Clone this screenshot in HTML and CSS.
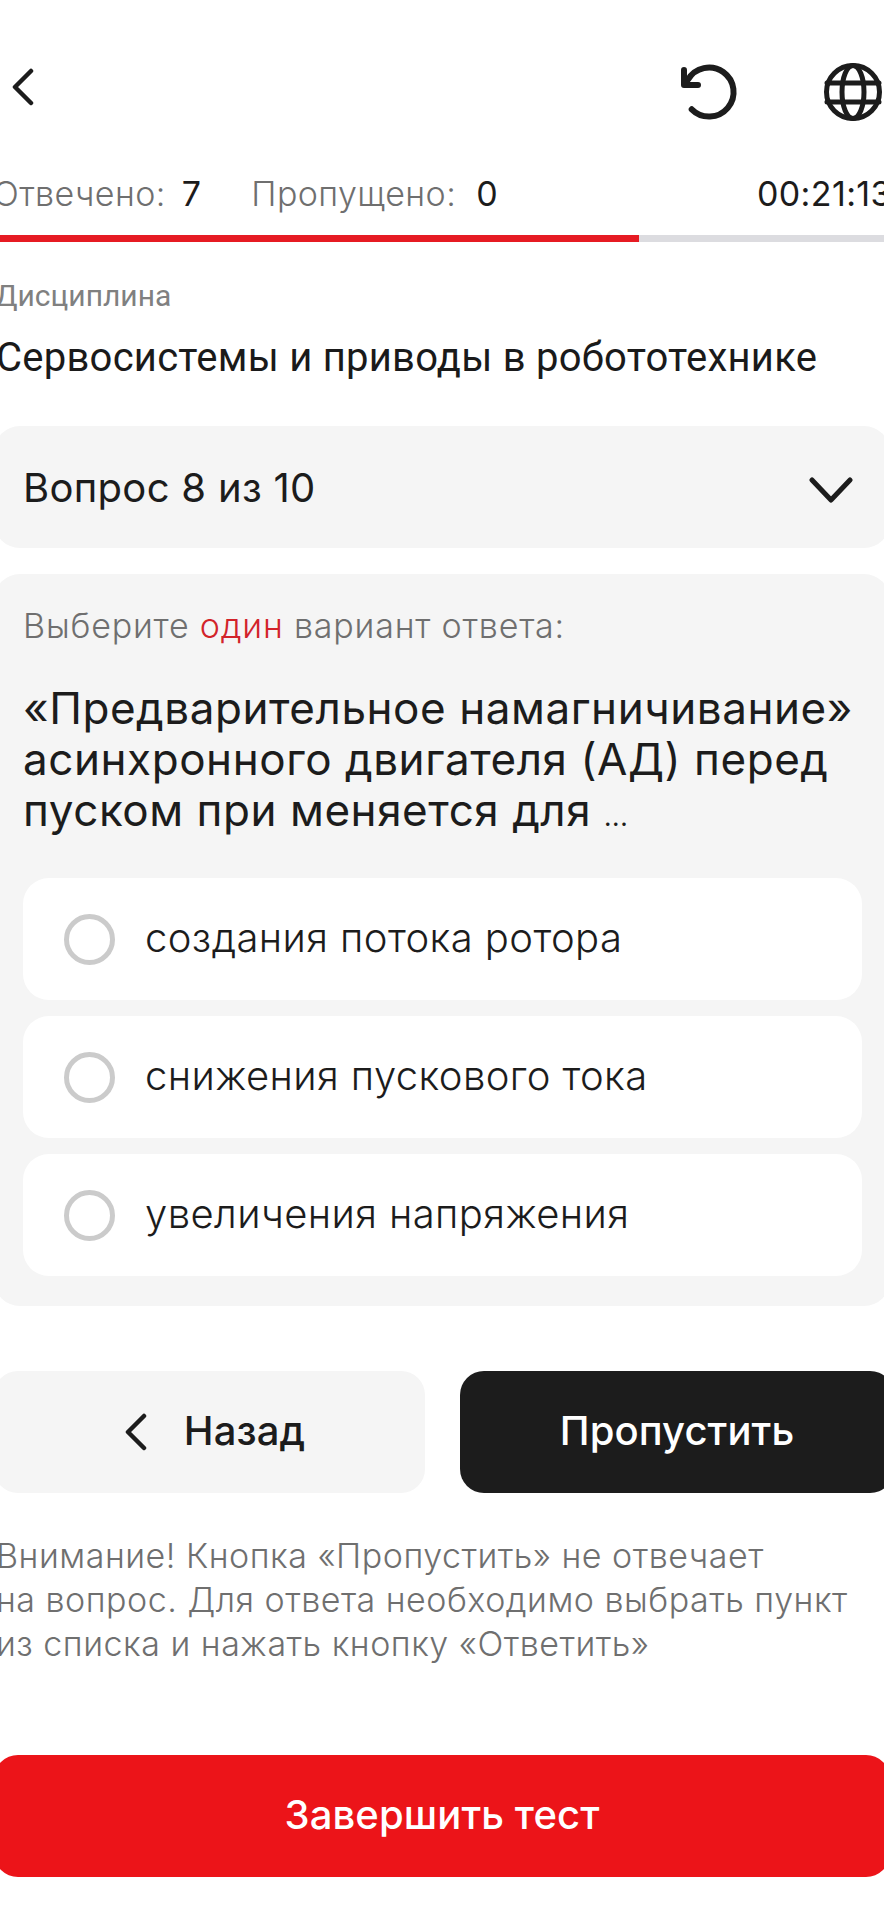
FILE: index.html
```html
<!DOCTYPE html>
<html lang="ru">
<head>
    <meta charset="UTF-8">
    <meta name="viewport" content="width=device-width, initial-scale=1.0">
    <title>Тест</title>
    <link rel="stylesheet" href="styles.css">
</head>
<body>
    <div id="page">
        <div class="topbar">
            <svg class="back-icon" viewBox="0 0 24 38"><path d="M20 3 L4 19 L20 35"/></svg>
            <div class="topbar-right">
                <svg class="top-icon" viewBox="0 0 60 60"><path d="M7.9 17.7 A24.5 24.5 0 1 1 11.7 47.3"/><path d="M4 8 V23 H18"/></svg>
                <svg class="top-icon globe" viewBox="0 0 60 60"><circle cx="30" cy="30" r="26.5"/><ellipse cx="30" cy="30" rx="11" ry="26.5"/><path d="M4 21 H56 M4 40 H56"/></svg>
            </div>
        </div>

        <div class="stats">
            <span class="stat">Отвечено: <b>7</b></span>
            <span class="stat">Пропущено: <b>0</b></span>
            <span class="timer">00:21:13</span>
        </div>
        <div class="progress"><div class="progress-fill" style="width: 639px"></div></div>

        <div class="subject">
            <p class="subject-label">Дисциплина</p>
            <p class="subject-name">Сервосистемы и приводы в робототехнике</p>
        </div>

        <div class="selector">
            <span>Вопрос 8 из 10</span>
            <svg class="selector-icon" viewBox="0 0 44 28"><path d="M3 4 L22 24 L41 4"/></svg>
        </div>

        <div class="question">
            <p class="prompt">Выберите <span class="accent">один</span> вариант ответа:</p>
            <h2 class="question-text">«Предварительное намагничивание» асинхронного двигателя (АД) перед пуском при меняется для <span class="dots">...</span></h2>
            <div class="options">
                <div class="option"><span class="radio"></span><span class="option-text">создания потока ротора</span></div>
                <div class="option"><span class="radio"></span><span class="option-text">снижения пускового тока</span></div>
                <div class="option"><span class="radio"></span><span class="option-text">увеличения напряжения</span></div>
            </div>
        </div>

        <div class="actions">
            <div class="btn btn-light">
                <svg class="btn-icon" viewBox="0 0 24 38"><path d="M20 3 L4 19 L20 35"/></svg>
                <span class="btn-text">Назад</span>
            </div>
            <div class="btn btn-dark"><span class="btn-text">Пропустить</span></div>
        </div>

        <p class="notice">Внимание! Кнопка «Пропустить» не отвечает<br>на вопрос. Для ответа необходимо выбрать пункт<br>из списка и нажать кнопку «Ответить»</p>

        <div class="btn btn-red"><span class="btn-text">Завершить тест</span></div>
    </div>
</body>
</html>
```

FILE: styles.css
```css
html, body {
    margin: 0;
    padding: 0;
    background: #fff;
    overflow: hidden;
}
body {
    font-family: Inter, "Noto Sans", sans-serif;
    color: #1c1c1c;
}
#page {
    width: 884px;
    height: 1920px;
    overflow: hidden;
}
p, h2 {
    margin: 0;
}
svg {
    fill: none;
    stroke: #1c1c1c;
    display: block;
}

.topbar {
    height: 62px;
    padding-top: 62px;
    display: flex;
    justify-content: space-between;
    align-items: flex-start;
}
.back-icon {
    width: 24px;
    height: 38px;
    margin: 6px 0 0 11px;
    stroke-width: 4.5;
    stroke-linecap: round;
    stroke-linejoin: round;
}
.topbar-right {
    display: flex;
    gap: 83px;
    margin-right: 1px;
}
.top-icon {
    width: 60px;
    height: 60px;
    stroke-width: 6;
    stroke-linecap: round;
    stroke-linejoin: round;
}
.globe {
    stroke-width: 5;
}

.stats {
    display: flex;
    align-items: center;
    height: 40px;
    margin: 49px -8px 0 -7px;
    font-size: 34px;
    font-weight: 300;
    letter-spacing: 0.4px;
    color: #6f6f6f;
    white-space: nowrap;
}
.stat {
    margin-right: 50px;
}
.stat b {
    font-weight: 400;
    color: #1c1c1c;
    margin-left: 6px;
}
.stat + .stat b {
    margin-left: 10px;
}
.timer {
    margin-left: auto;
    font-weight: 400;
    color: #1c1c1c;
}

.progress {
    height: 7px;
    margin-top: 22px;
    background: #dcdce0;
}
.progress-fill {
    height: 100%;
    background: #e61b23;
}

.subject {
    font-family: Roboto, sans-serif;
}
.subject-label {
    margin: 38px 0 0 -5px;
    font-size: 30px;
    line-height: 32px;
    color: #808080;
}
.subject-name {
    margin: 23px 0 0 -4px;
    font-size: 40px;
    line-height: 46px;
    letter-spacing: 0.25px;
    color: #1a1a1a;
}

.selector {
    height: 122px;
    margin: 45px -6px 0;
    padding: 0 37px 0 29px;
    display: flex;
    align-items: center;
    justify-content: space-between;
    background: #f5f5f5;
    border-radius: 26px;
    font-size: 40px;
    font-weight: 400;
    letter-spacing: 0.3px;
}
.selector-icon {
    width: 44px;
    height: 28px;
    margin-top: 5px;
    stroke-width: 5;
    stroke-linecap: round;
    stroke-linejoin: round;
}

.question {
    margin: 26px -6px 0;
    padding: 32px 28px 30px 29px;
    background: #f5f5f5;
    border-radius: 26px;
}
.prompt {
    font-size: 34px;
    line-height: 40px;
    font-weight: 300;
    letter-spacing: 0.8px;
    color: #6f6f6f;
}
.accent {
    color: #d2232a;
}
.question-text {
    margin-top: 37px;
    font-size: 44px;
    line-height: 51px;
    font-weight: 400;
    letter-spacing: 0.55px;
    color: #1c1c1c;
}
.dots {
    font-size: 26px;
}
.options {
    margin-top: 36px;
    display: flex;
    flex-direction: column;
    gap: 16px;
}
.option {
    height: 122px;
    display: flex;
    align-items: center;
    gap: 30px;
    padding-left: 41px;
    background: #fff;
    border-radius: 26px;
    font-size: 40px;
    font-weight: 300;
    letter-spacing: 0.4px;
}
.option-text {
    padding-bottom: 4px;
}
.radio {
    width: 41px;
    height: 41px;
    border: 5px solid #cbcbcb;
    border-radius: 50%;
    flex: none;
}

.actions {
    display: flex;
    gap: 35px;
    margin: 65px -10px 0 -6px;
}
.btn {
    height: 122px;
    display: flex;
    align-items: center;
    justify-content: center;
    border-radius: 24px;
    font-size: 40px;
    font-weight: 500;
    letter-spacing: 0.1px;
}
.btn-text {
    padding-bottom: 4px;
}
.btn-light {
    box-sizing: border-box;
    width: 431px;
    padding-left: 10px;
    gap: 36px;
    background: #f5f5f5;
}
.btn-icon {
    width: 24px;
    height: 38px;
    stroke-width: 4.5;
    stroke-linecap: round;
    stroke-linejoin: round;
}
.btn-dark {
    width: 434px;
    background: #1c1c1c;
    color: #fff;
}
.btn-red {
    margin: 89px -6px 0;
    background: #ec1419;
    color: #fff;
}

.notice {
    margin: 41px 0 0 -4px;
    font-size: 34px;
    line-height: 44px;
    font-weight: 300;
    letter-spacing: 0.5px;
    color: #6f6f6f;
}
```
